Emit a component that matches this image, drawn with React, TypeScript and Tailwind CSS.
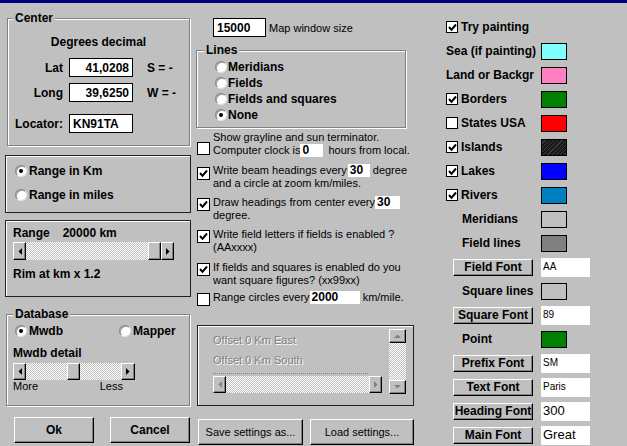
import React from "react";

const etched =
  "border border-[#808080] shadow-[inset_1px_1px_#ffffff,1px_1px_#ffffff]";
const panel = "border border-[#202020] shadow-[inset_1px_1px_#ffffff]";
const raised =
  "bg-[#c0c0c0] border border-t-white border-l-white border-r-black border-b-black shadow-[inset_-1px_-1px_#808080]";
const dither =
  "bg-[image:repeating-conic-gradient(#c0c0c0_0%_25%,#ffffff_0%_50%)] bg-[length:2px_2px]";

function Check({ checked, className = "" }: { checked?: boolean; className?: string }) {
  return (
    <div
      className={
        "w-[13px] h-[13px] shrink-0 bg-white border border-black flex items-center justify-center " +
        className
      }
    >
      {checked && (
        <svg width="9" height="9" viewBox="0 0 9 9">
          <path d="M1 4 L3.5 6.8 L8 1.5" stroke="#000" strokeWidth="2" fill="none" />
        </svg>
      )}
    </div>
  );
}

function Radio({ on }: { on?: boolean }) {
  return (
    <div className="w-[12px] h-[12px] shrink-0 rounded-full bg-white border border-t-[#808080] border-l-[#808080] border-b-[#e8e8e8] border-r-[#e8e8e8] shadow-[inset_1px_1px_#a0a0a0] flex items-center justify-center">
      {on && <div className="w-[4px] h-[4px] rounded-full bg-black" />}
    </div>
  );
}

function Arrow({ dir, disabled }: { dir: "l" | "r" | "u" | "d"; disabled?: boolean }) {
  const c = disabled ? "#808080" : "#000000";
  if (dir === "l")
    return (
      <svg width="4" height="7" viewBox="0 0 4 7">
        <polygon points="4,0 4,7 0.5,3.5" fill={c} />
      </svg>
    );
  if (dir === "r")
    return (
      <svg width="4" height="7" viewBox="0 0 4 7">
        <polygon points="0,0 0,7 3.5,3.5" fill={c} />
      </svg>
    );
  if (dir === "u")
    return (
      <svg width="7" height="4" viewBox="0 0 7 4">
        <polygon points="0,4 7,4 3.5,0.5" fill={c} />
      </svg>
    );
  return (
    <svg width="7" height="4" viewBox="0 0 7 4">
      <polygon points="0,0 7,0 3.5,3.5" fill={c} />
    </svg>
  );
}

function SBtn({
  dir,
  disabled,
  className = "",
}: {
  dir: "l" | "r" | "u" | "d";
  disabled?: boolean;
  className?: string;
}) {
  return (
    <div className={raised + " shrink-0 flex items-center justify-center " + className}>
      <Arrow dir={dir} disabled={disabled} />
    </div>
  );
}

function Title({ className = "", children }: { className?: string; children: React.ReactNode }) {
  return (
    <div className={"absolute top-[-8px] px-[2px] bg-[#c0c0c0] font-bold leading-[14px] " + className}>
      {children}
    </div>
  );
}

function CoordRow({
  label,
  value,
  extra,
  right,
  className = "",
}: {
  label: string;
  value: string;
  extra?: string;
  right?: boolean;
  className?: string;
}) {
  return (
    <div className={"flex items-center h-[19px] " + className}>
      <div className="w-[55px] text-right font-bold">{label}</div>
      <div
        className={
          "ml-[6px] w-[64px] h-[19px] bg-white border border-black font-bold flex items-center " +
          (right ? "justify-end pr-[3px]" : "pl-[3px]")
        }
      >
        {value}
      </div>
      {extra && <div className="ml-[14px] font-bold">{extra}</div>}
    </div>
  );
}

function Left() {
  return (
    <div className="ml-[5px] w-[186px] shrink-0 flex flex-col">
      <div className={"relative mt-[15px] ml-[2px] w-[183px] h-[128px] " + etched}>
        <Title className="left-[5px]">Center</Title>
        <div className="mt-[16px] text-center font-bold">Degrees decimal</div>
        <CoordRow className="mt-[9px]" label="Lat" value="41,0208" extra="S = -" right />
        <CoordRow className="mt-[6px]" label="Long" value="39,6250" extra="W = -" right />
        <CoordRow className="mt-[12px]" label="Locator:" value="KN91TA" />
      </div>

      <div className={"mt-[9px] w-[186px] h-[58px] pl-[9px] pt-[7px] " + panel}>
        <div className="flex items-center h-[16px]">
          <Radio on />
          <span className="ml-[2px] font-bold">Range in Km</span>
        </div>
        <div className="flex items-center h-[16px] mt-[8px]">
          <Radio />
          <span className="ml-[2px] font-bold">Range in miles</span>
        </div>
      </div>

      <div className={"mt-[7px] w-[186px] h-[77px] pl-[7px] pt-[5px] " + panel}>
        <div className="font-bold">
          <span>Range</span>
          <span className="ml-[13px]">20000 km</span>
        </div>
        <div className="mt-[2px] flex w-[161px] h-[18px]">
          <SBtn dir="l" className="w-[13px]" />
          <div className={"flex-1 " + dither} />
          <div className={raised + " w-[13px]"} />
          <SBtn dir="r" className="w-[13px]" />
        </div>
        <div className="mt-[7px] font-bold">Rim at km x 1.2</div>
      </div>

      <div className={"relative mt-[17px] ml-[1px] w-[184px] h-[92px] pl-[6px] pt-[9px] " + etched}>
        <Title className="left-[6px]">Database</Title>
        <div className="ml-[2px] flex items-center h-[14px]">
          <Radio on />
          <span className="ml-[2px] font-bold">Mwdb</span>
          <div className="ml-[56px]">
            <Radio />
          </div>
          <span className="ml-[2px] font-bold">Mapper</span>
        </div>
        <div className="mt-[8px] font-bold">Mwdb detail</div>
        <div className="mt-[3px] flex w-[122px] h-[17px]">
          <SBtn dir="l" className="w-[13px]" />
          <div className={"w-[41px] " + dither} />
          <div className={raised + " w-[13px]"} />
          <div className={"flex-1 " + dither} />
          <SBtn dir="r" className="w-[14px]" />
        </div>
        <div className="w-[110px] flex justify-between text-[11px] leading-[13px]">
          <span>More</span>
          <span>Less</span>
        </div>
      </div>

      <div className="mt-[11px] flex">
        <div className={raised + " ml-[9px] w-[80px] h-[26px] flex items-center justify-center font-bold"}>
          Ok
        </div>
        <div className={raised + " ml-[16px] w-[80px] h-[26px] flex items-center justify-center font-bold"}>
          Cancel
        </div>
      </div>
    </div>
  );
}

function Inp({ className = "", children }: { className?: string; children: React.ReactNode }) {
  return (
    <span
      className={
        "inline-block align-top bg-white h-[13px] font-bold text-[12px] leading-[13px] pl-[2px] " +
        className
      }
    >
      {children}
    </span>
  );
}

function Middle() {
  return (
    <div className="ml-[5px] w-[218px] shrink-0 flex flex-col">
      <div className="mt-[15px] ml-[17px] flex items-center">
        <div className="w-[53px] h-[19px] bg-white border border-black font-bold pl-[3px] flex items-center">
          15000
        </div>
        <span className="ml-[3px] text-[11px]">Map window size</span>
      </div>

      <div className={"relative mt-[13px] w-[210px] h-[78px] pl-[18px] pt-[8px] " + etched}>
        <Title className="left-[7px]">Lines</Title>
        {["Meridians", "Fields", "Fields and squares", "None"].map((t, i) => (
          <div key={t} className="flex items-center h-[16px]">
            <Radio on={i === 3} />
            <span className="ml-[1px] font-bold">{t}</span>
          </div>
        ))}
      </div>

      <div className="text-[11px] leading-[13px]">
        <div className="mt-[3px] ml-[1px] flex items-start">
          <Check className="mt-[11px]" />
          <div className="ml-[3px]">
            Show grayline and sun terminator.
            <br />
            Computer clock is<Inp className="w-[23px]">0</Inp>
            <span className="ml-[2px]"> hours from local.</span>
          </div>
        </div>
        <div className="mt-[7px] ml-[1px] flex items-start">
          <Check checked className="mt-[3px]" />
          <div className="ml-[3px]">
            Write beam headings every<Inp className="ml-[1px] w-[22px]">30</Inp> degree
            <br />
            and a circle at zoom km/miles.
          </div>
        </div>
        <div className="mt-[6px] ml-[1px] flex items-start">
          <Check checked className="mt-[2px]" />
          <div className="ml-[3px]">
            Draw headings from center every<Inp className="w-[25px]">30</Inp>
            <br />
            degree.
          </div>
        </div>
        <div className="mt-[6px] ml-[1px] flex items-start">
          <Check checked className="mt-[2px]" />
          <div className="ml-[3px]">
            Write field letters if fields is enabled ?
            <br />
            (AAxxxx)
          </div>
        </div>
        <div className="mt-[7px] ml-[1px] flex items-start">
          <Check checked className="mt-[2px]" />
          <div className="ml-[3px]">
            If fields and squares is enabled do you
            <br />
            want square figures? (xx99xx)
          </div>
        </div>
        <div className="mt-[4px] ml-[1px] flex items-start">
          <Check className="mt-[2px]" />
          <div className="ml-[3px]">
            Range circles every<Inp className="w-[50px]">2000</Inp> km/mile.
          </div>
        </div>
      </div>

      <div className={"mt-[19px] ml-[1px] w-[217px] h-[81px] flex " + panel}>
        <div className="pl-[15px] w-[191px] flex flex-col text-[11px] leading-[14px] text-[#808080] [text-shadow:1px_1px_0_#ffffff]">
          <div className="mt-[7px]">Offset 0 Km East</div>
          <div className="mt-[6px]">Offset 0 Km South</div>
          <div className="mt-[6px] w-[155px] border-t border-dotted border-[#808080]" />
          <div className="mt-[2px] flex w-[169px] h-[17px]">
            <SBtn dir="l" disabled className="w-[13px]" />
            <div className={"flex-1 " + dither} />
            <SBtn dir="r" disabled className="w-[13px]" />
          </div>
        </div>
        <div className="mt-[3px] flex flex-col w-[17px] h-[65px]">
          <SBtn dir="u" disabled className="h-[14px]" />
          <div className={"flex-1 " + dither} />
          <SBtn dir="d" disabled className="h-[14px]" />
        </div>
      </div>

      <div className="mt-[13px] flex text-[11px]">
        <div className={raised + " ml-[2px] w-[105px] h-[26px] flex items-center justify-center"}>
          Save settings as...
        </div>
        <div className={raised + " ml-[7px] w-[104px] h-[26px] flex items-center justify-center"}>
          Load settings...
        </div>
      </div>
    </div>
  );
}

type Row = {
  kind: "check" | "label" | "ind" | "btn";
  text: string;
  checked?: boolean;
  swatch?: string;
  input?: string;
  big?: boolean;
};

const rows: Row[] = [
  { kind: "check", text: "Try painting", checked: true },
  { kind: "label", text: "Sea (if painting)", swatch: "bg-[#80ffff]" },
  { kind: "label", text: "Land or Backgr", swatch: "bg-[#ff80c0]" },
  { kind: "check", text: "Borders", checked: true, swatch: "bg-[#008000]" },
  { kind: "check", text: "States USA", swatch: "bg-[#ff0000]" },
  {
    kind: "check",
    text: "Islands",
    checked: true,
    swatch:
      "bg-[#181818] bg-[image:repeating-linear-gradient(135deg,#181818_0px,#181818_2px,#3c3c3c_2px,#3c3c3c_3px)]",
  },
  { kind: "check", text: "Lakes", checked: true, swatch: "bg-[#0000ff]" },
  { kind: "check", text: "Rivers", checked: true, swatch: "bg-[#0080c0]" },
  { kind: "ind", text: "Meridians", swatch: "bg-[#c0c0c0]" },
  { kind: "ind", text: "Field lines", swatch: "bg-[#808080]" },
  { kind: "btn", text: "Field Font", input: "AA" },
  { kind: "ind", text: "Square lines", swatch: "bg-[#c0c0c0]" },
  { kind: "btn", text: "Square Font", input: "89" },
  { kind: "ind", text: "Point", swatch: "bg-[#008000]" },
  { kind: "btn", text: "Prefix Font", input: "SM" },
  { kind: "btn", text: "Text Font", input: "Paris" },
  { kind: "btn", text: "Heading Font", input: "300", big: true },
  { kind: "btn", text: "Main Font", input: "Great", big: true },
];

function Right() {
  return (
    <div className="ml-[32px] w-[181px] shrink-0 flex flex-col mt-[12px]">
      {rows.map((r) => (
        <div key={r.text} className="h-[24px] flex items-center shrink-0">
          {r.kind === "btn" ? (
            <>
              <div
                className={
                  raised +
                  " ml-[7px] w-[80px] h-[17px] flex items-center justify-center font-bold leading-none whitespace-nowrap"
                }
              >
                {r.text}
              </div>
              <div
                className={
                  "ml-[8px] w-[49px] h-[19px] bg-white pl-[2px] flex items-center " +
                  (r.big ? "text-[13px]" : "text-[10px]")
                }
              >
                {r.input}
              </div>
            </>
          ) : (
            <>
              <div className="w-[95px] flex items-center font-bold whitespace-nowrap">
                {r.kind === "check" && (
                  <>
                    <Check checked={r.checked} className="!w-[12px] !h-[12px]" />
                    <span className="ml-[3px]">{r.text}</span>
                  </>
                )}
                {r.kind === "label" && <span>{r.text}</span>}
                {r.kind === "ind" && <span className="pl-[16px]">{r.text}</span>}
              </div>
              {r.swatch && <div className={"w-[26px] h-[17px] border border-black " + r.swatch} />}
            </>
          )}
        </div>
      ))}
    </div>
  );
}

export default function App() {
  return (
    <div className="w-[627px] h-[446px] bg-[#c0c0c0] overflow-hidden font-['Liberation_Sans',Arial,sans-serif] text-black text-[12px] leading-[14px] select-none">
      <div className="h-[3px] bg-[#000080]" />
      <div className="flex items-start">
        <Left />
        <Middle />
        <Right />
      </div>
    </div>
  );
}
